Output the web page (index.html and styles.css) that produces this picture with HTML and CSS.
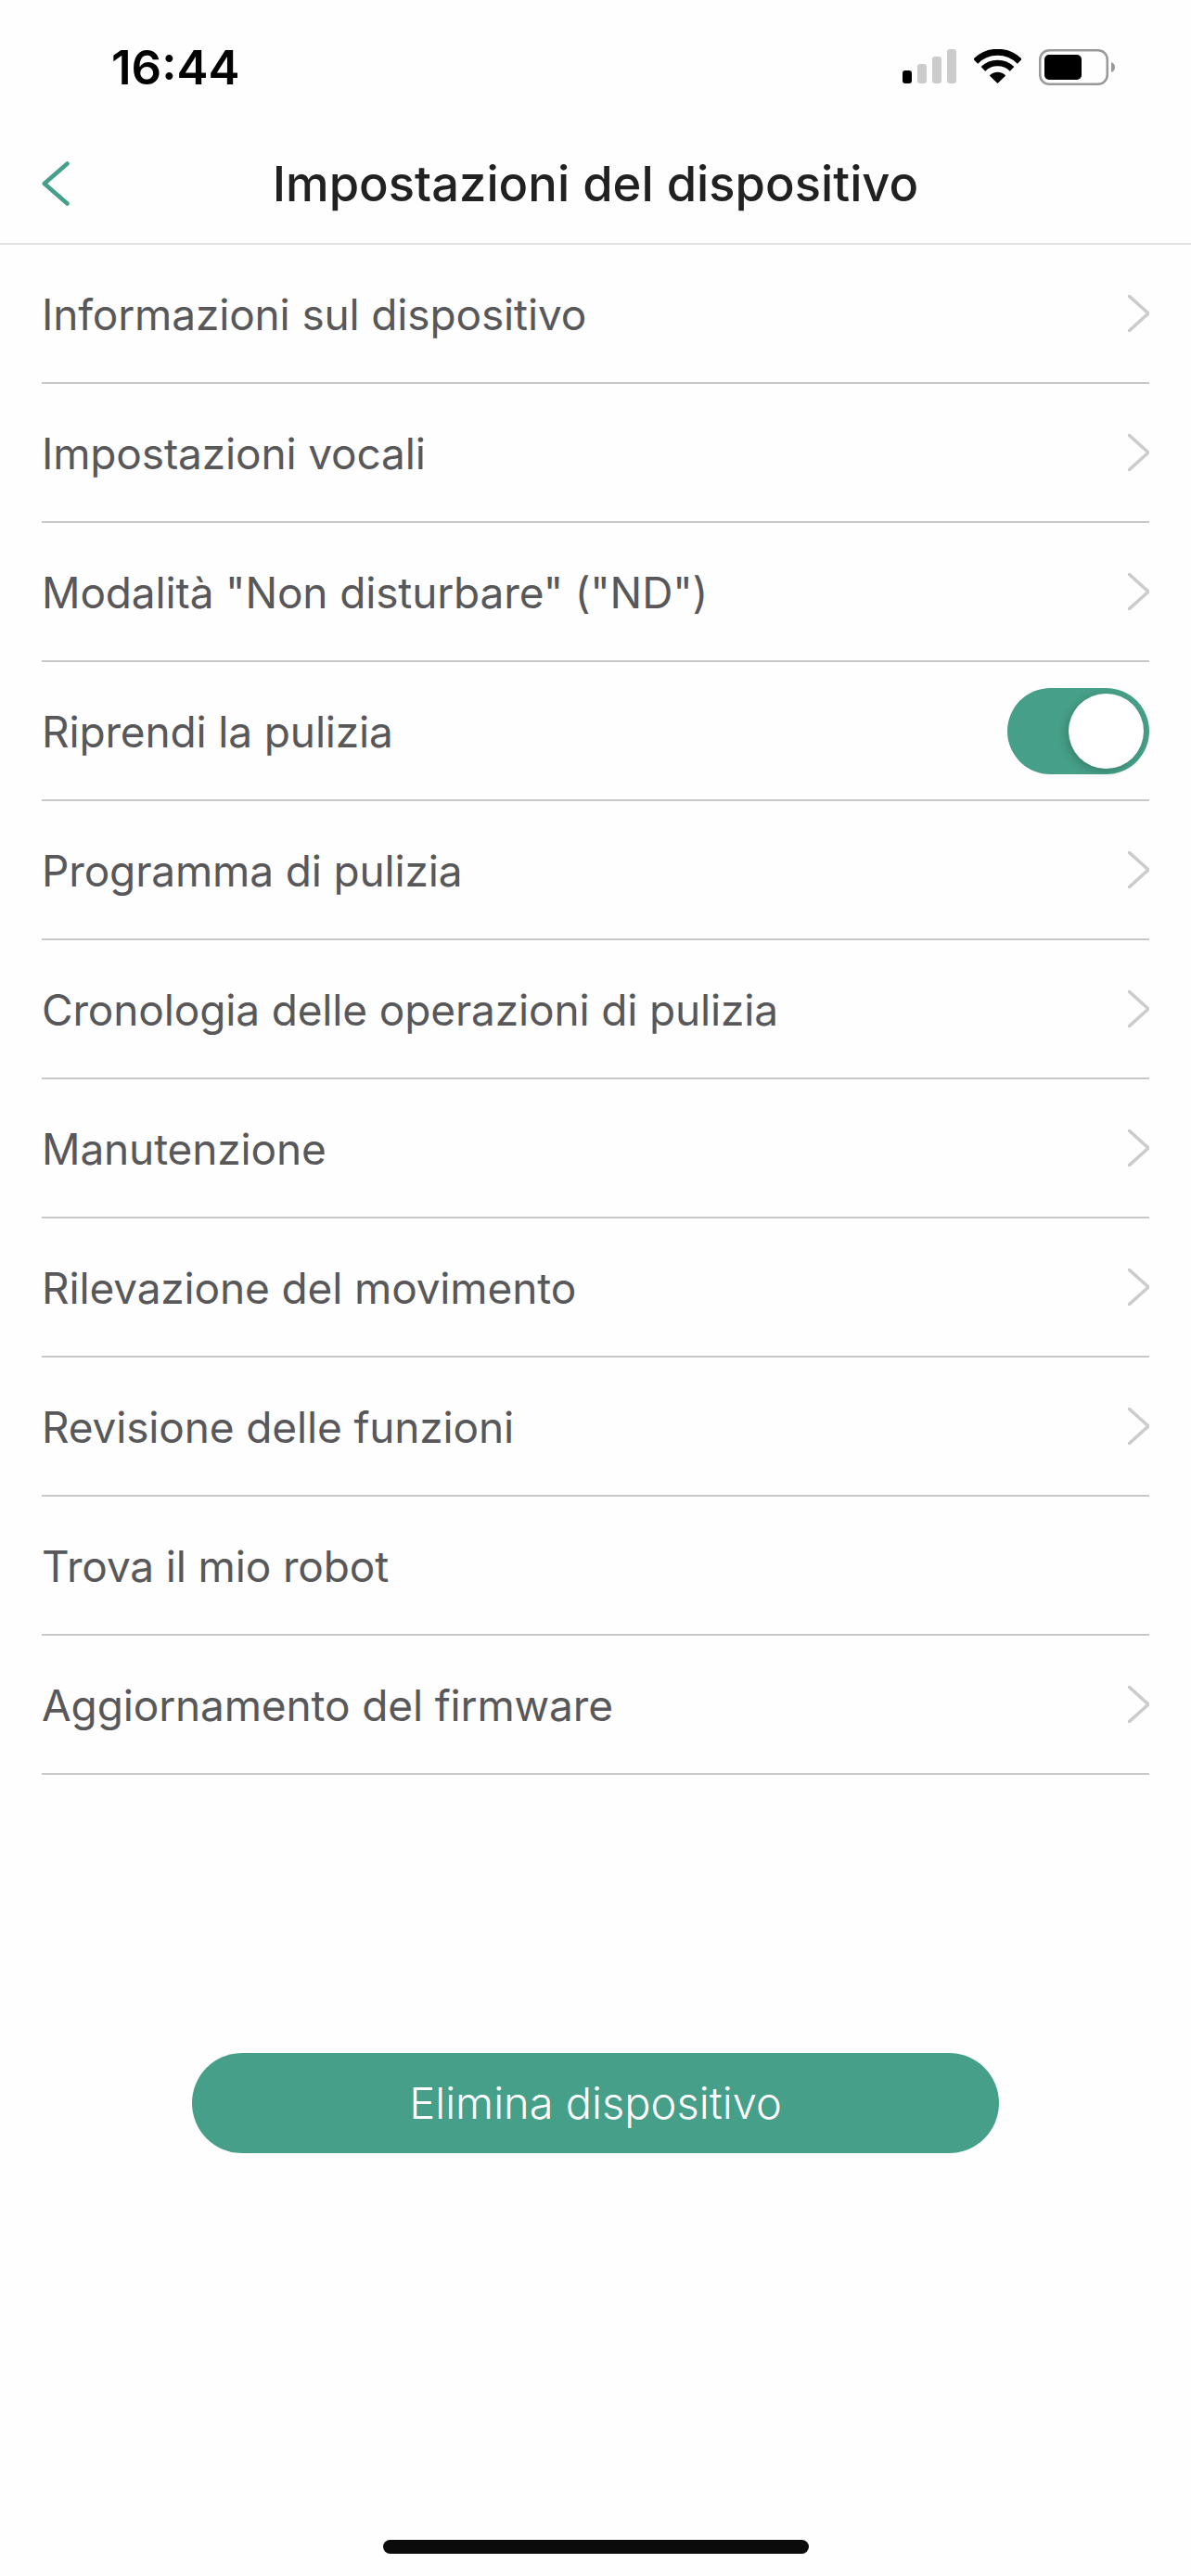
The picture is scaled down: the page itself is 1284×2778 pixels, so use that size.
FILE: index.html
```html
<!DOCTYPE html>
<html lang="it">
<head>
<meta charset="utf-8">
<title>Impostazioni del dispositivo</title>
<link rel="stylesheet" href="styles.css">
</head>
<body>
<div class="screen">
  <header class="status">
    <span class="time">16:44</span>
    <div class="status-icons">
      <svg class="signal" width="58" height="37" viewBox="0 0 58 37">
        <rect x="0" y="23" width="10" height="14" rx="3" fill="#000"/>
        <rect x="16" y="16" width="10" height="21" rx="3" fill="#ccc"/>
        <rect x="32" y="8" width="10" height="29" rx="3" fill="#ccc"/>
        <rect x="48" y="0" width="10" height="37" rx="3" fill="#ccc"/>
      </svg>
      <svg class="wifi" width="51" height="37" viewBox="0 0 51 37">
        <path d="M1.7 13.2A33.500 33.500 0 0 1 49.300 13.2" fill="none" stroke="#000" stroke-width="7"/>
        <path d="M9.900 21.400A22.200 22.200 0 0 1 41.100 21.400" fill="none" stroke="#000" stroke-width="6.6"/>
        <path d="M25.500 37L16.800 28.400A12.300 12.300 0 0 1 34.200 28.400Z" fill="#000"/>
      </svg>
      <svg class="battery" width="82" height="39" viewBox="0 0 82 39">
        <rect x="1.250" y="1.250" width="72.500" height="36.500" rx="10" fill="none" stroke="#999" stroke-width="2.500"/>
        <rect x="6" y="6" width="40" height="27" rx="5" fill="#000"/>
        <path d="M78 14C81 15 82 17 82 19.500C82 22 81 24 78 25Z" fill="#999"/>
      </svg>
    </div>
  </header>

  <nav class="nav">
    <svg class="back" width="30" height="48" viewBox="0 0 30 48">
      <path d="M27.500 2.500L2.800 24L27.500 45.500" fill="none" stroke="#45a08a" stroke-width="4.500" stroke-linecap="round" stroke-linejoin="round"/>
    </svg>
    <h1 class="title">Impostazioni del dispositivo</h1>
  </nav>

  <ul class="list">
    <li class="row"><span>Informazioni sul dispositivo</span><svg class="chev" width="23" height="40" viewBox="0 0 23 40"><path d="M1 1L22 20L1 39"/></svg></li>
    <li class="row"><span>Impostazioni vocali</span><svg class="chev" width="23" height="40" viewBox="0 0 23 40"><path d="M1 1L22 20L1 39"/></svg></li>
    <li class="row"><span>Modalità "Non disturbare" ("ND")</span><svg class="chev" width="23" height="40" viewBox="0 0 23 40"><path d="M1 1L22 20L1 39"/></svg></li>
    <li class="row"><span>Riprendi la pulizia</span><div class="toggle"><div class="knob"></div></div></li>
    <li class="row"><span>Programma di pulizia</span><svg class="chev" width="23" height="40" viewBox="0 0 23 40"><path d="M1 1L22 20L1 39"/></svg></li>
    <li class="row"><span>Cronologia delle operazioni di pulizia</span><svg class="chev" width="23" height="40" viewBox="0 0 23 40"><path d="M1 1L22 20L1 39"/></svg></li>
    <li class="row"><span>Manutenzione</span><svg class="chev" width="23" height="40" viewBox="0 0 23 40"><path d="M1 1L22 20L1 39"/></svg></li>
    <li class="row"><span>Rilevazione del movimento</span><svg class="chev" width="23" height="40" viewBox="0 0 23 40"><path d="M1 1L22 20L1 39"/></svg></li>
    <li class="row"><span>Revisione delle funzioni</span><svg class="chev" width="23" height="40" viewBox="0 0 23 40"><path d="M1 1L22 20L1 39"/></svg></li>
    <li class="row"><span>Trova il mio robot</span></li>
    <li class="row"><span>Aggiornamento del firmware</span><svg class="chev" width="23" height="40" viewBox="0 0 23 40"><path d="M1 1L22 20L1 39"/></svg></li>
  </ul>

  <button class="delete" type="button">Elimina dispositivo</button>
  <div class="home"></div>
</div>
</body>
</html>
```

FILE: styles.css
```css
* { box-sizing: border-box; }
html, body { margin: 0; padding: 0; background: #fefefe; }
.screen {
  width: 1284px;
  height: 2778px;
  display: flex;
  flex-direction: column;
  font-family: Inter, "Liberation Sans", sans-serif;
  overflow: hidden;
}
.status {
  height: 110px;
  display: flex;
  justify-content: space-between;
  align-items: flex-start;
  padding: 45px 82px 0 120px;
}
.time {
  font-size: 51px;
  line-height: 56px;
  font-weight: 600;
  color: #000;
}
.status-icons {
  display: flex;
  align-items: flex-start;
  gap: 19px;
  padding-top: 8px;
}
.nav {
  height: 154px;
  display: flex;
  align-items: center;
  justify-content: center;
  border-bottom: 2px solid #e0e0e0;
  padding-top: 23px;
  position: relative;
}
.back { position: absolute; left: 45px; top: 64px; }
.title {
  margin: 0;
  font-size: 52.500px;
  font-weight: 500;
  color: #212121;
}
.list { list-style: none; margin: 0 45px; padding: 0; }
.row {
  height: 150px;
  display: flex;
  align-items: center;
  justify-content: space-between;
  border-bottom: 2px solid #c8c8c8;
  font-size: 46px;
  letter-spacing: -0.15px;
  color: #58585a;
}
.row > span { padding-top: 2px; }
.chev { fill: none; stroke: #ccc; stroke-width: 3.500; stroke-linecap: round; stroke-linejoin: round; }
.toggle {
  width: 153px;
  height: 93px;
  border-radius: 47px;
  background: #469f88;
  display: flex;
  align-items: center;
  justify-content: flex-end;
  padding-right: 6px;
}
.knob {
  width: 81px;
  height: 81px;
  border-radius: 50%;
  background: #fff;
  box-shadow: -3px 3px 10px rgba(0, 0, 0, .18);
}
.delete {
  width: 870px;
  height: 108px;
  margin: 300px 0 0 207px;
  padding-bottom: 2px;
  border: 0;
  border-radius: 54px;
  background: #469f88;
  color: #fff;
  font-family: inherit;
  font-size: 47px;
  font-weight: 300;
}
.home {
  width: 459px;
  height: 15px;
  margin: auto 0 24px 413px;
  border-radius: 8px;
  background: #0b0b0b;
}
```
